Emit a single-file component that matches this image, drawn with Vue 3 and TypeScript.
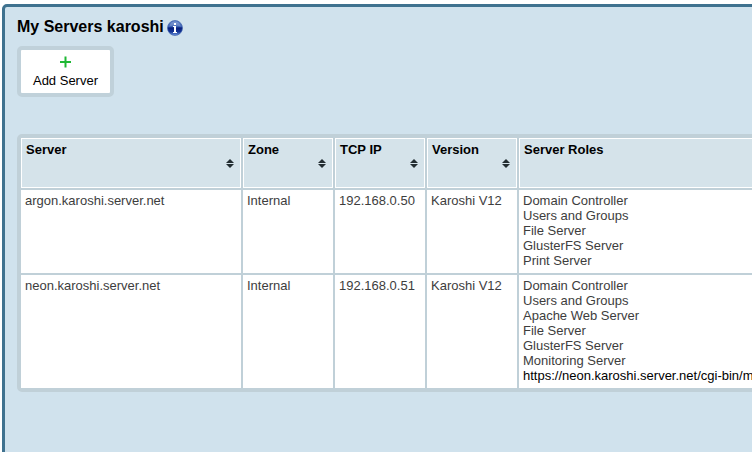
<script setup lang="ts">
interface ServerRow {
  name: string
  zone: string
  ip: string
  version: string
  roles: string[]
  link?: string
}

const columns: string[] = ['Server', 'Zone', 'TCP IP', 'Version', 'Server Roles']

const servers: ServerRow[] = [
  {
    name: 'argon.karoshi.server.net',
    zone: 'Internal',
    ip: '192.168.0.50',
    version: 'Karoshi V12',
    roles: ['Domain Controller', 'Users and Groups', 'File Server', 'GlusterFS Server', 'Print Server'],
  },
  {
    name: 'neon.karoshi.server.net',
    zone: 'Internal',
    ip: '192.168.0.51',
    version: 'Karoshi V12',
    roles: ['Domain Controller', 'Users and Groups', 'Apache Web Server', 'File Server', 'GlusterFS Server', 'Monitoring Server'],
    link: 'https://neon.karoshi.server.net/cgi-bin/m',
  },
]
</script>

<template>
  <div class="page">
    <main class="panel">
      <header class="title">
        <h1>My Servers karoshi</h1>
        <svg class="info" viewBox="0 0 16 16" aria-hidden="true">
          <defs>
            <linearGradient id="ball" x1="0" y1="0" x2="0" y2="1">
              <stop offset="0" stop-color="#5f82c8" />
              <stop offset="0.4" stop-color="#3a60b4" />
              <stop offset="0.5" stop-color="#08207c" />
              <stop offset="0.75" stop-color="#143496" />
              <stop offset="1" stop-color="#6f9ae0" />
            </linearGradient>
          </defs>
          <circle cx="8" cy="8" r="7.5" fill="url(#ball)" stroke="#3f62ac" stroke-width="0.7" />
          <path d="M2.2 6.5C3 3 5.3 1.5 8 1.5s5 1.5 5.800 5C10 5.200 6 5.200 2.200 6.500z" fill="#fff" opacity="0.2" />
          <path d="M7 3h2v2H7zM6 6h3v6h1v1H6v-1h1V7H6z" fill="#fff" />
        </svg>
      </header>

      <button class="add" type="button">
        <svg class="plus" viewBox="0 0 11 12" aria-hidden="true">
          <path d="M5.500 .5v11M0 6h11" stroke="#1fb834" stroke-width="2" />
        </svg>
        <span>Add Server</span>
      </button>

      <div class="table" role="table">
        <div v-for="column in columns" :key="column" class="head" role="columnheader">
          <span>{{ column }}</span>
          <svg class="sort" viewBox="0 0 8 9" aria-hidden="true">
            <path d="M4 0l4 4H0zM0 5h8L4 9z" fill="#232d31" />
          </svg>
        </div>
        <template v-for="server in servers" :key="server.name">
          <div class="cell">{{ server.name }}</div>
          <div class="cell">{{ server.zone }}</div>
          <div class="cell">{{ server.ip }}</div>
          <div class="cell">{{ server.version }}</div>
          <div class="cell">
            <div v-for="role in server.roles" :key="role">{{ role }}</div>
            <a v-if="server.link" class="link">{{ server.link }}</a>
          </div>
        </template>
      </div>
    </main>
  </div>
</template>

<style>
body {
  margin: 0;
  background: #fff;
  overflow: hidden;
}
</style>

<style scoped>
.page {
  box-sizing: border-box;
  width: 752px;
  height: 452px;
  padding: 4px 0 0 2px;
  overflow: hidden;
  background: #fff;
  font: 13px/15px "Liberation Sans", Arial, sans-serif;
}
.panel {
  box-sizing: border-box;
  width: 1000px;
  height: 600px;
  padding: 10px 12px;
  border: 3px solid #3f728f;
  border-radius: 5px;
  background: #d0e2ed;
}
.title {
  display: flex;
  align-items: center;
  gap: 3px;
  height: 20px;
}
h1 {
  margin: 0;
  font-size: 16px;
  line-height: 20px;
  color: #000;
}
.info {
  width: 16px;
  height: 16px;
  margin-top: 2px;
}
.add {
  box-sizing: border-box;
  display: flex;
  flex-direction: column;
  align-items: center;
  gap: 5px;
  width: 97px;
  height: 51px;
  margin: 9px 0 37px;
  padding: 6px 0 0;
  border: 4px solid #c0d1da;
  border-radius: 5px;
  background: #fff;
  color: #000;
  font: inherit;
}
.plus {
  width: 11px;
  height: 12px;
}
.table {
  display: grid;
  grid-template-columns: 220px 90px 90px 90px 400px;
  grid-template-rows: 50px;
  gap: 2px;
  width: max-content;
  border: 4px solid #c0d0d8;
  border-radius: 5px;
  background: #c0d0d8;
}
.head {
  display: flex;
  flex-direction: column;
  justify-content: flex-start;
  padding: 3px 6px 0 4px;
  border: 1px solid #fff;
  background: #d5e3ea;
  color: #000;
  font-weight: bold;
}
.sort {
  align-self: flex-end;
  width: 8px;
  height: 9px;
  margin-top: 2px;
}
.cell {
  padding: 3px 4px 5px;
  background: #fff;
  color: #3d3d3d;
  white-space: nowrap;
}
.link {
  color: #000;
}
</style>
